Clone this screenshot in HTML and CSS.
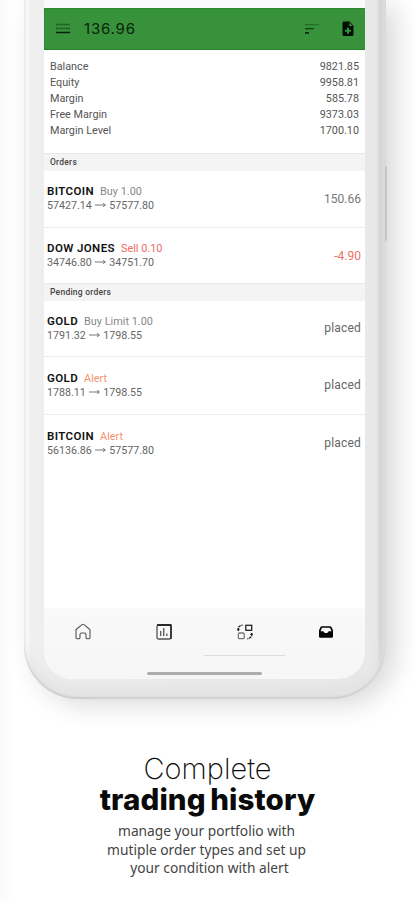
FILE: index.html
```html
<!DOCTYPE html>
<html lang="en">
<head>
<meta charset="utf-8">
<title>Complete trading history</title>
<link rel="stylesheet" href="styles.css">
</head>
<body>
<main class="page">
  <div class="phone">
    <i class="side-button"></i>
    <div class="screen">
      <header class="bar">
        <svg class="menu" width="14" height="12" viewBox="0 0 14 12"><path d="M0 1.5h14M0 5.5h14" stroke="#1d5a22" stroke-width="1.3" stroke-dasharray="2 .5"/><path d="M0 9.5h14" stroke="#08200a" stroke-width="1.5"/></svg>
        <span class="profit">136.96</span>
        <svg class="sort" width="14" height="12" viewBox="0 0 14 12"><path d="M0 1.7h14" stroke="#246b29" stroke-width="1.2"/><path d="M0 5.7h9" stroke="#123f16" stroke-width="1.3"/><path d="M0 9.9h4" stroke="#051b07" stroke-width="1.5"/></svg>
        <svg class="add" width="12" height="16" viewBox="0 0 12 16"><path d="M1.5.5h6L11.5 5v8.500q0 1.500-1.500 1.500H2Q.5 15 .5 13.500v-11.500Q.5.5 1.500.5z" fill="#021004"/><path d="M7.300 1.500V5h3.300z" fill="#38913b"/><path d="M6 6.800v6M3 9.800h6" stroke="#38913b" stroke-width="2"/></svg>
      </header>
      <dl class="summary">
        <div><dt>Balance</dt><dd>9821.85</dd></div>
        <div><dt>Equity</dt><dd>9958.81</dd></div>
        <div><dt>Margin</dt><dd>585.78</dd></div>
        <div><dt>Free Margin</dt><dd>9373.03</dd></div>
        <div><dt>Margin Level</dt><dd>1700.10</dd></div>
      </dl>
      <h3 class="band">Orders</h3>
      <div class="order"><div><p class="name"><b>BITCOIN</b><span>Buy 1.00</span></p><p class="price">57427.14 <svg width="12" height="6" viewBox="0 0 12 6"><path d="M0 3h10M8 1.300l2.500 1.700L8 4.700"/></svg> 57577.80</p></div><span class="value">150.66</span></div>
      <div class="order"><div><p class="name"><b>DOW JONES</b><span class="sell">Sell 0.10</span></p><p class="price">34746.80 <svg width="12" height="6" viewBox="0 0 12 6"><path d="M0 3h10M8 1.300l2.500 1.700L8 4.700"/></svg> 34751.70</p></div><span class="value loss">-4.90</span></div>
      <h3 class="band">Pending orders</h3>
      <div class="order"><div><p class="name"><b>GOLD</b><span>Buy Limit 1.00</span></p><p class="price">1791.32 <svg width="12" height="6" viewBox="0 0 12 6"><path d="M0 3h10M8 1.300l2.500 1.700L8 4.700"/></svg> 1798.55</p></div><span class="value placed">placed</span></div>
      <div class="order low"><div><p class="name"><b>GOLD</b><span class="alert">Alert</span></p><p class="price">1788.11 <svg width="12" height="6" viewBox="0 0 12 6"><path d="M0 3h10M8 1.300l2.500 1.700L8 4.700"/></svg> 1798.55</p></div><span class="value placed">placed</span></div>
      <div class="order low last"><div><p class="name"><b>BITCOIN</b><span class="alert">Alert</span></p><p class="price">56136.86 <svg width="12" height="6" viewBox="0 0 12 6"><path d="M0 3h10M8 1.300l2.500 1.700L8 4.700"/></svg> 57577.80</p></div><span class="value placed">placed</span></div>
      <nav class="nav">
        <div class="tabs">
          <a><svg width="16" height="17" viewBox="0 0 16 17"><path d="M1 7.300Q1 6.500 1.700 6L7 1.600q1-.8 2 0L14.300 6q.7.500.7 1.300v7.200q0 1.300-1.300 1.300h-1.400q-1.300 0-1.300-1.300v-3q0-1.500-1.500-1.500h-3Q5 10 5 11.500v3q0 1.300-1.300 1.300H2.300Q1 15.800 1 14.500z" fill="none" stroke="#555" stroke-width="1.100" stroke-linejoin="round"/></svg></a>
          <a><svg width="16" height="16" viewBox="0 0 16 16"><rect x="1" y="1" width="14" height="14" rx="1.500" fill="none" stroke="#555" stroke-width="1.300"/><path d="M1 1h14v14" fill="none" stroke="#111" stroke-width="1.300"/><path d="M4.700 7v5M7.700 4v8M10.800 9.500V12" stroke="#555" stroke-width="1.300"/></svg></a>
          <a class="active"><svg width="16" height="16" viewBox="0 0 16 16" fill="none" stroke="#222" stroke-width="1.300"><rect x="8.800" y="1.300" width="5.900" height="5"/><rect x="1.400" y="9" width="5.800" height="5.700" rx="1" stroke="#777"/><path d="M1.200 7V5q0-3.500 4.500-3.800" stroke-dasharray="3 .7"/><path d="M14.800 9v1.500q0 3.500-4.500 4.300" stroke-dasharray="3 .7"/><path d="M0 4.700h3L1.500 7.200zM16 11h-3l1.500-2.600z" fill="#222" stroke="none"/></svg></a>
          <a><svg width="16" height="14" viewBox="0 0 16 14"><path d="M4 1.200h8Q13 1.200 13.500 2L15 5.500v6q0 1.300-1.300 1.300H2.300Q1 12.800 1 11.500v-6L2.500 2Q3 1.200 4 1.200z" fill="#050505"/><path d="M4 2.700h8l1.500 3.500h-2.800L9.200 8H6.800L5.300 6.200H2.500z" fill="#f7f7f7"/></svg></a>
        </div>
        <i class="home-bar"></i>
      </nav>
    </div>
  </div>
  <section class="caption">
    <h1><span>Complete</span><strong>trading history</strong></h1>
    <p><span class="l1">manage your portfolio with</span><span class="l2">mutiple order types and set up</span><span class="l3">your condition with alert</span></p>
  </section>
</main>
</body>
</html>
```
FILE: styles.css
```css
* { box-sizing: border-box; }
body, h1, h3, p, dl, dd { margin: 0; }
body { background: #fefefe; font-family: Roboto, "Liberation Sans", sans-serif; color: #555; }
.page { width: 415px; height: 900px; overflow: hidden; background: linear-gradient(90deg, #fafafa 0, #fff 14px, #fff 100%); }
.phone {
  position: relative; width: 362px; height: 699px; margin-left: 24px; padding: 0 20px 20px;
  border-radius: 0 0 54px 54px;
  background: linear-gradient(90deg, #f8f8f8 0, #fbfbfb 4px, #f0f0f0 7px, #eee 20px, #e9e9e9 342px, #e7e7e7 353px, #d4d4d4 356px, #dedede 100%);
  box-shadow: 10px 6px 26px rgba(0,0,0,.15), inset 0 -2px 2px #cdcdcd, inset 0 -18px 16px -6px #e2e2e2;
}
.side-button { position: absolute; right: -1px; top: 166px; width: 2px; height: 75px; background: #c6c6c6; border-radius: 1px; }
.screen { display: flex; flex-direction: column; width: 321px; height: 679px; padding-top: 8px; background: #fff; border-radius: 0 0 28px 28px; overflow: hidden; box-shadow: inset 0 8px #f9f9fb; }
.bar { display: flex; align-items: center; height: 42px; flex: none; padding: 0 6px 0 11px; background: #38913b; border: 1px solid #278b29; border-width: 1px 0 1px 1px; }
.profit { margin-left: 14px; font-family: Inter, sans-serif; font-size: 15px; line-height: 20px; letter-spacing: .8px; color: #0a250c; flex: 1; }
.add { margin: 0 5px 0 23px; }
.summary { height: 103px; padding: 9px 6px 0; font-size: 10.800px; line-height: 16px; flex: none; }
.summary div { display: flex; justify-content: space-between; }
.band { height: 18px; flex: none; padding-left: 6px; border-top: 1px solid #e9e9e9; background: #f4f4f4; color: #444; font-size: 8.500px; line-height: 17px; font-weight: 500; letter-spacing: .25px; }
.order { display: flex; align-items: center; justify-content: space-between; height: 57.5px; flex: none; padding: 0 4px 1px 3px; border-bottom: 1px solid #ececec; }
.order:has(+ .band) { height: 55px; border: 0; padding-bottom: 0; }
.order.low { padding-bottom: 0; }
.order.last { border: 0; }
.band + .order { height: 57px; }
.band ~ .band + .order { height: 56px; }
.name { font-size: 10.900px; line-height: 15px; color: #888; white-space: nowrap; }
.name b { display: inline-block; margin-right: 6px; color: #111; font-size: 11.500px; letter-spacing: .4px; font-weight: 600; }
.price { font-size: 10.700px; line-height: 14px; white-space: nowrap; color: #666; }
.price svg { vertical-align: 1px; fill: none; stroke: #777; stroke-width: 1; }
.name .sell { color: #ee6b60; }
.name .alert { color: #f49370; }
.value { font-size: 12px; color: #777; }
.value.loss { color: #ed7067; }
.value.placed { color: #666; letter-spacing: .2px; }
.nav { height: 71px; margin-top: auto; background: linear-gradient(180deg, #f9f9f9, #f6f6f6); flex: none; }
.tabs { display: grid; grid-template-columns: repeat(4, 81px); margin-left: -2px; height: 48px; }
.tabs a { display: flex; align-items: center; justify-content: center; border-bottom: 1px solid transparent; }
.tabs .active { border-color: #ddd; }
.home-bar { display: block; width: 115px; height: 3px; margin: 16px 0 0 103px; background: #adadad; border-radius: 2px; }
.caption { width: 415px; padding-top: 53px; text-align: center; white-space: nowrap; }
h1 { color: #0a0a0a; font-family: Inter, sans-serif; font-size: 29px; line-height: 31px; font-weight: 200; }
h1 span, h1 strong { display: block; }
h1 span { padding-top: 1px; }
h1 strong { font-weight: 800; font-size: 29.500px; letter-spacing: .1px; word-spacing: -2px; }
.caption p { padding-top: 7px; color: #444; font-family: "Noto Sans", sans-serif; font-size: 13.750px; line-height: 18.500px; }
.caption p span { display: block; }
.l1, .l2 { position: relative; left: -1px; }
.l3 { position: relative; left: 2px; }
```
